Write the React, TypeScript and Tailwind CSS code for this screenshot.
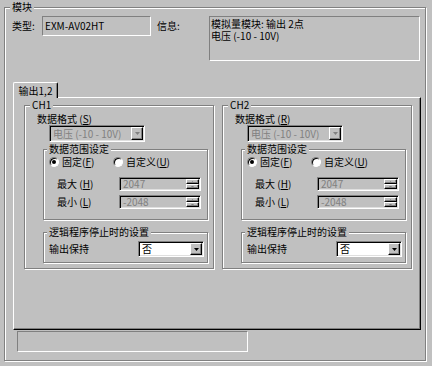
import type { ReactNode } from 'react'

const etched = 'border border-[#808080] shadow-[inset_1px_1px_0_#fff,1px_1px_0_#fff]'
const sunken = 'border border-t-[#808080] border-l-[#808080] border-r-white border-b-white'
const deep = `${sunken} shadow-[inset_1px_1px_0_#000,inset_-1px_-1px_0_#dfdfdf]`
const raised =
  'border border-t-white border-l-white border-r-black border-b-black shadow-[inset_-1px_-1px_0_#808080]'

const GroupBox = ({
  title,
  className,
  titleLeft,
  children,
}: {
  title: string
  className: string
  titleLeft: string
  children: ReactNode
}) => (
  <div className={`relative ${etched} ${className}`}>
    <span className={`absolute top-[-7px] ${titleLeft} h-[12px] bg-[#c0c0c0] px-[2px] leading-[12px]`}>{title}</span>
    {children}
  </div>
)

const Arrow = ({ disabled }: { disabled?: boolean }) => (
  <svg width="5" height="3" viewBox="0 0 5 3">
    <path d="M0 0h5L2.5 3z" fill={disabled ? '#808080' : '#000'} />
  </svg>
)

const Combo = ({ text, disabled, className }: { text: string; disabled?: boolean; className: string }) => (
  <div className={`flex p-[1px] ${deep} ${disabled ? 'bg-[#c0c0c0] text-[#808080]' : 'bg-white text-black'} ${className}`}>
    <span className="flex-1 self-center pl-[2px] leading-[12px]">{text}</span>
    <div className={`flex w-[12px] items-center justify-center bg-[#c0c0c0] ${raised}`}>
      <Arrow disabled={disabled} />
    </div>
  </div>
)

const Spin = ({ value }: { value: string }) => (
  <div className={`flex h-[14px] w-[82px] p-[1px] bg-[#c0c0c0] ${deep}`}>
    <span className="flex-1 self-center pl-[2px] leading-[10px] text-[#808080]">{value}</span>
    <div className="flex w-[13px] flex-col">
      <div className={`flex flex-1 items-center justify-center ${raised}`}>
        <svg width="3" height="2" viewBox="0 0 3 2">
          <path d="M1.5 0L3 2H0z" fill="#808080" />
        </svg>
      </div>
      <div className={`flex flex-1 items-center justify-center ${raised}`}>
        <svg width="3" height="2" viewBox="0 0 3 2">
          <path d="M0 0h3L1.5 2z" fill="#808080" />
        </svg>
      </div>
    </div>
  </div>
)

const Radio = ({ checked, children, className }: { checked?: boolean; children: ReactNode; className?: string }) => (
  <div className={`flex items-center ${className ?? ''}`}>
    <div className="flex h-[10px] w-[10px] items-center justify-center rounded-full border border-t-[#808080] border-l-[#808080] border-r-white border-b-white bg-white shadow-[inset_1px_1px_0_#000]">
      {checked && <div className="h-[4px] w-[4px] rounded-full bg-black" />}
    </div>
    <span className="ml-[3px] leading-[12px]">{children}</span>
  </div>
)

const Channel = ({ title, fmtKey }: { title: string; fmtKey: string }) => (
  <GroupBox title={title} className="h-[164px] w-[190px]" titleLeft="left-[5px]">
    <div className="ml-[12px] mt-[6px] h-[13px] leading-[13px]">
      数据格式 (<span className="underline">{fmtKey}</span>)
    </div>
    <Combo className="ml-[24px] h-[17px] w-[96px]" disabled text="电压 (-10 - 10V)" />

    <GroupBox title="数据范围设定" className="ml-[18px] mt-[7px] h-[71px] w-[165px]" titleLeft="left-[3px]">
      <div className="ml-[5px] mt-[6px] flex h-[12px] items-center">
        <Radio checked className="w-[64px]">
          固定(<span className="underline">F</span>)
        </Radio>
        <Radio>
          自定义(<span className="underline">U</span>)
        </Radio>
      </div>
      <div className="ml-[13px] mt-[9px] flex h-[14px] items-center">
        <span className="w-[62px] leading-[12px]">
          最大 (<span className="underline">H</span>)
        </span>
        <Spin value="2047" />
      </div>
      <div className="ml-[13px] mt-[4px] flex h-[14px] items-center">
        <span className="w-[62px] leading-[12px]">
          最小 (<span className="underline">L</span>)
        </span>
        <Spin value="-2048" />
      </div>
    </GroupBox>

    <GroupBox title="逻辑程序停止时的设置" className="ml-[18px] mt-[12px] h-[31px] w-[165px]" titleLeft="left-[3px]">
      <div className="ml-[5px] mt-[8px] flex items-center">
        <span className="w-[89px] leading-[12px]">输出保持</span>
        <Combo className="h-[16px] w-[66px]" text="否" />
      </div>
    </GroupBox>
  </GroupBox>
)

export default function App() {
  return (
    <div className="h-[366px] w-[432px] overflow-hidden bg-[#c0c0c0] pl-[4px] pt-[7px] font-['Noto_Sans_CJK_SC','Liberation_Sans',sans-serif] text-[10px] text-black">
      <GroupBox title="模块" className="h-[354px] w-[422px]" titleLeft="left-[5px]">
        <div className="flex items-start pl-[7px] pt-[8px]">
          <div className="flex h-[20px] w-[30px] items-center leading-[12px]">类型:</div>
          <div className={`flex h-[20px] w-[109px] items-center pl-[2px] leading-[12px] ${sunken}`}>EXM-AV02HT</div>
          <div className="ml-[6px] flex h-[20px] w-[52px] items-center leading-[12px]">信息:</div>
          <div className={`h-[45px] w-[211px] pl-[1px] pt-[1px] leading-[12px] ${sunken}`}>
            <div>模拟量模块: 输出 2点</div>
            <div>电压 (-10 - 10V)</div>
          </div>
        </div>

        <div className="ml-[8px] mt-[21px] flex flex-col">
          <div className="relative z-10 flex h-[16px] w-[45px] items-center justify-center rounded-t-[2px] border-l border-r border-t border-l-white border-r-black border-t-white bg-[#c0c0c0] leading-[12px] shadow-[inset_-1px_0_0_#808080]">
            输出1,2
          </div>
          <div className="-mt-[1px] flex h-[233px] w-[408px] gap-[8px] border border-b-black border-l-white border-r-black border-t-white pl-[10px] pt-[7px] shadow-[inset_-1px_-1px_0_#808080]">
            <Channel title="CH1" fmtKey="S" />
            <Channel title="CH2" fmtKey="R" />
          </div>
        </div>

        <div className={`ml-[12px] mt-[1px] h-[21px] w-[231px] ${sunken}`} />
      </GroupBox>
    </div>
  )
}
